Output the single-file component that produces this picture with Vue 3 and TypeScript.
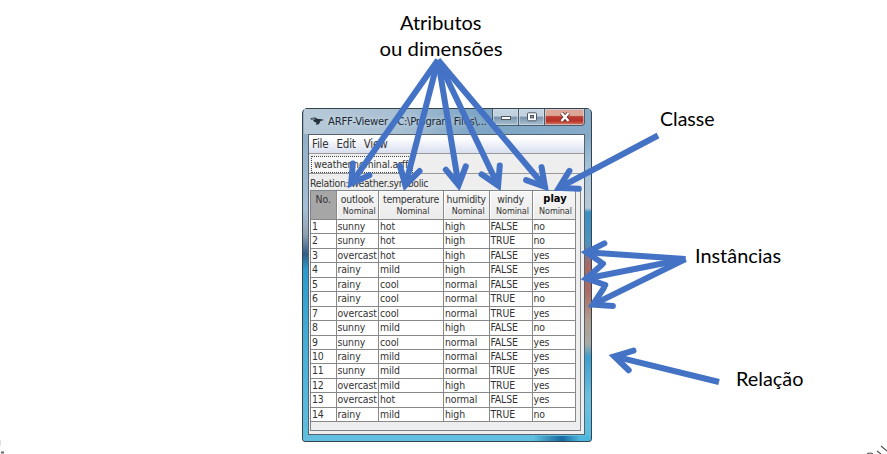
<script setup lang="ts">
type Point = [number, number]

const columns = ['outlook', 'temperature', 'humidity', 'windy', 'play']
const rows: string[][] = [
  ['sunny', 'hot', 'high', 'FALSE', 'no'],
  ['sunny', 'hot', 'high', 'TRUE', 'no'],
  ['overcast', 'hot', 'high', 'FALSE', 'yes'],
  ['rainy', 'mild', 'high', 'FALSE', 'yes'],
  ['rainy', 'cool', 'normal', 'FALSE', 'yes'],
  ['rainy', 'cool', 'normal', 'TRUE', 'no'],
  ['overcast', 'cool', 'normal', 'TRUE', 'yes'],
  ['sunny', 'mild', 'high', 'FALSE', 'no'],
  ['sunny', 'cool', 'normal', 'FALSE', 'yes'],
  ['rainy', 'mild', 'normal', 'FALSE', 'yes'],
  ['sunny', 'mild', 'normal', 'TRUE', 'yes'],
  ['overcast', 'mild', 'high', 'TRUE', 'yes'],
  ['overcast', 'hot', 'normal', 'FALSE', 'yes'],
  ['rainy', 'mild', 'high', 'TRUE', 'no'],
]

const links: { from: Point; to: Point }[] = [
  { from: [438, 60], to: [348, 188] },
  { from: [438, 60], to: [404, 190.5] },
  { from: [438, 60], to: [459.5, 190.5] },
  { from: [438, 60], to: [500.5, 190.5] },
  { from: [438, 60], to: [548.5, 191] },
  { from: [658, 135.5], to: [554, 190.5] },
  { from: [685.5, 259], to: [581, 252] },
  { from: [685.5, 259], to: [581, 279.5] },
  { from: [685.5, 259], to: [588, 307] },
  { from: [719, 382], to: [609, 355] },
]

// Shaft and open arrow head; the head's vertex sits back from the tip by the mitre length.
const arrows = links.map(({ from, to }) => {
  const angle = Math.atan2(from[1] - to[1], from[0] - to[0])
  const at = (origin: Point, a: number, d: number): Point => [
    origin[0] + Math.cos(a) * d,
    origin[1] + Math.sin(a) * d,
  ]
  const vertex = at(to, angle, 5.5)
  const left = at(vertex, angle + 0.53, 20)
  const right = at(vertex, angle - 0.53, 20)
  return { shaft: `M${from}L${vertex}`, head: `M${left}L${vertex}L${right}` }
})

const labels = [
  { text: 'Atributos', x: 400, y: 30, width: 81.5 },
  { text: 'ou dimensões', x: 379.5, y: 55.5, width: 123 },
  { text: 'Classe', x: 660, y: 125.7, width: 54.5 },
  { text: 'Instâncias', x: 695, y: 262.7, width: 86 },
  { text: 'Relação', x: 736, y: 386.3, width: 67.5 },
]
</script>

<template>
  <main class="slide">
    <section class="window">
      <header class="titlebar">
        <svg class="bird" viewBox="0 0 14 10">
          <path d="M0 3Q2 1 5 1.5L8 3Q11 2.5 14 4L10.5 5L9 8L6 9L6.5 6.5Q4 6.5 3 4Z" fill="#26313b" />
          <path d="M2 3L5 3" stroke="#a9b4bc" />
        </svg>
        <span class="title">ARFF-Viewer - C:\Program Files\...</span>
        <div class="controls">
          <span class="control minimize">
            <svg viewBox="0 0 12 10"><rect x="1.5" y="4.5" width="9" height="3" fill="#fff" stroke="#4c5865" /></svg>
          </span>
          <span class="control maximize">
            <svg viewBox="0 0 12 10"><rect x="1.5" y=".8" width="9" height="8" rx="1" fill="#fff" stroke="#4c5865" /><rect x="4.5" y="3.5" width="3" height="2.4" fill="#8798a8" stroke="#4c5865" /></svg>
          </span>
          <span class="control close">
            <svg viewBox="0 0 12 10"><path d="M2.5 1L9.5 9M9.5 1L2.5 9" stroke="#6b3438" stroke-width="4" /><path d="M2.5 1L9.5 9M9.5 1L2.5 9" stroke="#fff" stroke-width="2.4" /></svg>
          </span>
        </div>
      </header>
      <div class="client">
        <nav class="menubar"><span>File</span><span>Edit</span><span>View</span></nav>
        <div class="tabs"><span class="tab">weather.nominal.arff</span></div>
        <div class="relation">Relation: weather.symbolic</div>
        <div class="pane">
          <div class="grid head">
            <div class="number">No.</div>
            <div v-for="column in columns" :key="column" :class="{ chosen: column === 'play' }">
              <span>{{ column }}</span><small>Nominal</small>
            </div>
          </div>
          <div v-for="(row, index) in rows" :key="index" class="grid row">
            <div>{{ index + 1 }}</div>
            <div v-for="(cell, i) in row" :key="i">{{ cell }}</div>
          </div>
        </div>
      </div>
    </section>

    <svg class="annotations" viewBox="0 0 887 454">
      <g fill="none" stroke="#4472c4" stroke-width="6">
        <template v-for="(arrow, i) in arrows" :key="i">
          <path :d="arrow.shaft" />
          <path :d="arrow.head" stroke-linecap="round" stroke-miterlimit="5" />
        </template>
      </g>
      <g class="labels">
        <text v-for="label in labels" :key="label.text" :x="label.x" :y="label.y" :textLength="label.width" lengthAdjust="spacingAndGlyphs">{{ label.text }}</text>
      </g>
      <g stroke="#555" stroke-width="1.2">
        <path d="M881 446L887 451M877 451L881 454" />
        <path d="M867 454Q870 452 873 454" fill="none" />
        <path d="M1 452.5H4" stroke="#666" stroke-width="2" />
        <path d="M.3 440V446" stroke="#ddd" />
      </g>
    </svg>
  </main>
</template>

<style>
body {
  background: #fff;
}
</style>

<style scoped>
.slide {
  position: relative;
  box-sizing: border-box;
  width: 887px;
  height: 454px;
  padding: 108px 0 0 302px;
  overflow: hidden;
  background: #fff;
}
.slide * {
  box-sizing: border-box;
}
.window {
  display: flex;
  flex-direction: column;
  width: 290px;
  height: 334px;
  padding: 0 6px 6px 5px;
  border: 1px solid #36444f;
  border-radius: 5px 5px 3px 3px;
  background:
    linear-gradient(90deg, transparent 80%, #1768a0 90%, #4cb6dc 96%) 0 100% / 100% 5px no-repeat,
    linear-gradient(#84a9c5 0 25px, #a5c4dc 60px, #b9c9d6 99px, #398fc2 103px, #4f93bd 135px, #a66864 155px, #a96a62 182px, #b09c8c 210px, #a9aaa5 235px, #3d9fce 248px, #6ec0e2 290px, #54bddf) 100% 0 / 7px 100% no-repeat,
    linear-gradient(#91afc8 0 25px, #a5bfd5 100px, #93a1b4 125px, #315e84 145px, #2b9bcd 160px, #47afd6 240px, #62bfdf);
  font-family: "DejaVu Sans Condensed", "DejaVu Sans", sans-serif;
  font-stretch: condensed;
  font-size: 10.4px;
  color: #333;
}
.titlebar {
  display: flex;
  flex: none;
  align-items: flex-start;
  height: 25px;
  margin: 0 -5px 0 -4px;
  padding-left: 6px;
  background: linear-gradient(90deg, #b8cad8, #a7bfd2 35%, #7da5c5 60%, #86abc9);
}
.bird {
  width: 14px;
  height: 10px;
  margin-top: 7px;
}
.title {
  flex: none;
  width: 162px;
  margin-left: 4px;
  font-size: 11.2px;
  letter-spacing: -0.25px;
  line-height: 25px;
  white-space: nowrap;
  color: #1c2833;
  text-shadow: 0 0 5px #dce7ef;
}
.controls {
  display: flex;
  margin-left: 2px;
  height: 17px;
  border: 1px solid #4b5c6b;
  border-top: 0;
  border-radius: 0 0 4px 4px;
  overflow: hidden;
}
.control {
  display: flex;
  justify-content: center;
  align-items: center;
  width: 26px;
  background: linear-gradient(#c3d2df 45%, #7893aa 50%, #a7bfd1);
  border-right: 1px solid #4b5c6b;
  box-shadow: inset 0 0 0 1px #d5e2ec99;
}
.control svg {
  width: 12px;
  height: 10px;
}
.close {
  width: 39px;
  border: 0;
  background: linear-gradient(#dca596 40%, #bb3a30 48%, #b63328 75%, #d98068);
}
.client {
  display: flex;
  flex-direction: column;
  flex: 1;
  border: 1px solid #56616a;
  background: #eee;
}
.menubar {
  display: flex;
  flex: none;
  gap: 8px;
  height: 19px;
  padding-left: 3px;
  border-bottom: 1px solid #999;
  background: linear-gradient(#fff 15%, #d9dff0);
  font-size: 11.5px;
  letter-spacing: -0.2px;
  line-height: 19px;
}
.tabs {
  flex: none;
  height: 20px;
  padding: 2px 0 0 2px;
  border-bottom: 1px solid #999;
}
.tab {
  display: block;
  width: 102px;
  height: 17px;
  padding-left: 2px;
  border: 1px dotted #444;
  background: #f7f7f7;
  letter-spacing: -0.15px;
  line-height: 15px;
  white-space: nowrap;
}
.relation {
  flex: none;
  height: 16px;
  padding-left: 1px;
  letter-spacing: -0.3px;
  line-height: 18px;
  white-space: nowrap;
}
.pane {
  flex: 1;
  margin: 0 3px 3px 1px;
  border: 1px solid #7c858c;
  overflow: hidden;
}
.grid {
  display: grid;
  grid-template-columns: 25.5px 42.5px 65px 45.5px 43px 43px;
}
.grid > div {
  border-right: 1px solid #888;
  border-bottom: 1px solid #888;
  white-space: nowrap;
  overflow: hidden;
}
.head {
  height: 29px;
  text-align: center;
}
.head > div {
  padding-top: 2px;
  background: linear-gradient(#f6f6f6, #ebebeb);
  box-shadow: inset 1px 1px #fff;
  line-height: 12px;
}
.head span,
.head small {
  display: block;
}
.head span {
  letter-spacing: -0.25px;
}
.head small {
  padding-left: 4px;
  font-size: 9px;
  letter-spacing: -0.1px;
  line-height: 12px;
}
.head .number {
  background: #a6a6a6;
  box-shadow: none;
}
.head .chosen span {
  padding-left: 3px;
  font-size: 11px;
  font-weight: bold;
  letter-spacing: 0;
  color: #000;
}
.row {
  height: 14.45px;
  letter-spacing: -0.1px;
  line-height: 12.5px;
}
.row > div {
  padding-left: 1px;
  background: #fff;
}
.annotations {
  position: absolute;
  inset: 0;
  width: 887px;
  height: 454px;
}
.labels {
  font-family: Lato, sans-serif;
  font-size: 19px;
  fill: #000;
}
</style>
